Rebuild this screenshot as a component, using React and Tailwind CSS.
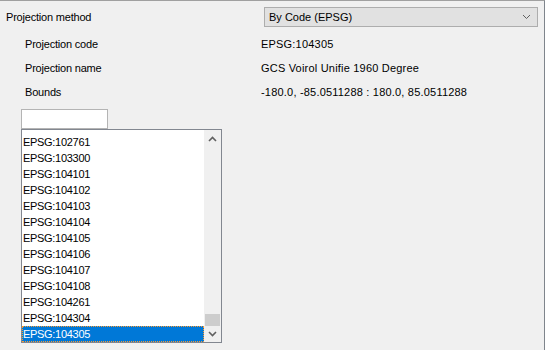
const CODES = [
  "EPSG:102761",
  "EPSG:103300",
  "EPSG:104101",
  "EPSG:104102",
  "EPSG:104103",
  "EPSG:104104",
  "EPSG:104105",
  "EPSG:104106",
  "EPSG:104107",
  "EPSG:104108",
  "EPSG:104261",
  "EPSG:104304",
  "EPSG:104305",
];

const SELECTED = "EPSG:104305";

const INFO = [
  ["Projection code", "EPSG:104305"],
  ["Projection name", "GCS Voirol Unifie 1960 Degree"],
  ["Bounds", "-180.0, -85.0511288 : 180.0, 85.0511288"],
];

function Chevron({ up = false, thin = false, className = "" }) {
  return (
    <svg width="9" height="6" viewBox="0 0 9 6" className={className}>
      <path
        d={up ? "M1 5 L4.5 1.5 L8 5" : "M1 1 L4.5 4.5 L8 1"}
        fill="none"
        stroke="currentColor"
        strokeWidth={thin ? 1 : 1.6}
      />
    </svg>
  );
}

export default function App() {
  return (
    <div className="w-[545px] h-[350px] overflow-hidden bg-[#f0f0f0] border-t border-r border-t-[#a0a0a0] border-r-[#7f858c] font-['Liberation_Sans',Arial,sans-serif] text-[11px] text-black pt-[6px]">
      {/* Projection method */}
      <div className="flex items-center h-[20px]">
        <span className="w-[264px] pl-[6px] tracking-[-0.2px]">Projection method</span>
        <div className="flex items-center justify-between w-[274px] h-[20px] border border-[#adadad] bg-[#e1e1e1] pl-[4px] pr-[6px]">
          <span>By Code (EPSG)</span>
          <Chevron thin className="text-[#606060]" />
        </div>
      </div>

      {/* Info rows */}
      <div className="mt-[5px]">
        {INFO.map(([label, value]) => (
          <div key={label} className="flex items-center h-[24px]">
            <span className="w-[261px] pl-[25px] tracking-[-0.2px]">{label}</span>
            <span className="tracking-[0.2px]">{value}</span>
          </div>
        ))}
      </div>

      {/* Filter box */}
      <div className="mt-[5px] ml-[21px] w-[87px] h-[20px] border border-[#b4b4b4] bg-white" />

      {/* Code list */}
      <div className="ml-[21px] w-[201px] h-[214px] border border-[#828790] bg-white flex">
        <div className="flex-1 pt-[4px] tracking-[-0.3px]">
          {CODES.map((code) => (
            <div
              key={code}
              className={
                code === SELECTED
                  ? "h-[16px] leading-[14px] pl-0 bg-[#0078d7] text-white border border-dotted border-[#ff9a2e]"
                  : "h-[16px] leading-[16px] pl-[1px]"
              }
            >
              {code}
            </div>
          ))}
        </div>
        <div className="w-[17px] bg-[#f0f0f0] flex flex-col">
          <div className="h-[17px] flex items-center justify-center text-[#606060]">
            <Chevron up />
          </div>
          <div className="flex-1" />
          <div className="h-[12px] bg-[#cdcdcd] mx-[1px]" />
          <div className="h-[16px] flex items-center justify-center text-[#606060]">
            <Chevron />
          </div>
        </div>
      </div>
    </div>
  );
}
